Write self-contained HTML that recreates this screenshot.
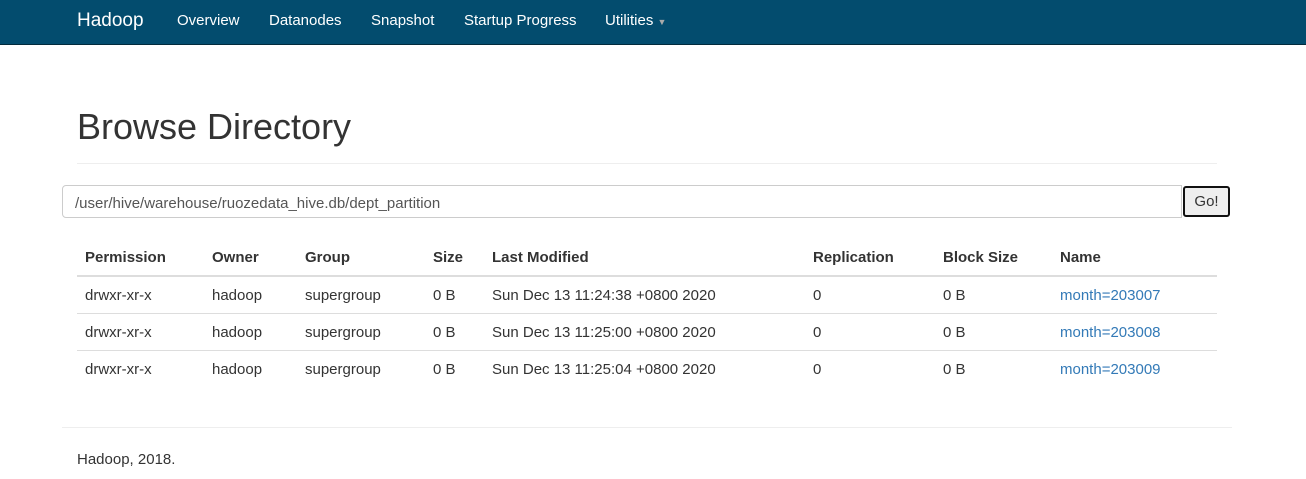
<!DOCTYPE html>
<html><head><style>
body{margin:0;font-family:"Liberation Sans",sans-serif;font-size:15px;color:#333;background:#fff;width:1306px;height:479px;overflow:hidden;position:relative}
.nav{position:absolute;left:0;top:0;width:1306px;height:44px;background:#034c6e;border-bottom:1px solid #022a3c}
.nav span{position:absolute;top:12px;color:#fff;font-size:15px}
.abs{position:absolute;white-space:nowrap}
h1{position:absolute;left:77px;top:106px;margin:0;font-size:36px;font-weight:normal;color:#333}
.hr{position:absolute;height:1px;background:#eee}
.input{position:absolute;left:62px;top:185px;width:1120px;height:33px;border:1px solid #ccc;border-radius:4px 0 0 4px;box-sizing:border-box}
.btn{position:absolute;left:1183px;top:186px;width:47px;height:31px;border:2px solid #111;border-radius:3px;background:#eee;box-sizing:border-box;text-align:center;line-height:28px;font-size:15px}
.row{position:absolute;left:77px;width:1140px;height:1px;background:#ddd}
a{color:#337ab7;text-decoration:none}
</style></head><body>
<div class="nav">
<span style="left:77px;top:10px;font-size:19px">Hadoop</span>
<span style="left:177px">Overview</span>
<span style="left:269px">Datanodes</span>
<span style="left:371px">Snapshot</span>
<span style="left:464px">Startup Progress</span>
<span style="left:605px">Utilities <span style="position:static;font-size:9px;color:#aaa">▼</span></span>
</div>
<h1>Browse Directory</h1>
<div class="hr" style="left:77px;top:163px;width:1140px"></div>
<div class="input"><span class="abs" style="left:12px;top:9px;color:#555">/user/hive/warehouse/ruozedata_hive.db/dept_partition</span></div>
<div class="btn">Go!</div>
<div style="font-weight:bold">
<span class="abs" style="left:85px;top:249px">Permission</span>
<span class="abs" style="left:212px;top:249px">Owner</span>
<span class="abs" style="left:305px;top:249px">Group</span>
<span class="abs" style="left:433px;top:249px">Size</span>
<span class="abs" style="left:492px;top:249px">Last Modified</span>
<span class="abs" style="left:813px;top:249px">Replication</span>
<span class="abs" style="left:943px;top:249px">Block Size</span>
<span class="abs" style="left:1060px;top:249px">Name</span>
</div>
<div class="row" style="top:275px;height:2px"></div>
<div class="row" style="top:313px"></div>
<div class="row" style="top:350px"></div>
<div>
<span class="abs" style="left:85px;top:287px">drwxr-xr-x</span><span class="abs" style="left:212px;top:287px">hadoop</span><span class="abs" style="left:305px;top:287px">supergroup</span><span class="abs" style="left:433px;top:287px">0 B</span><span class="abs" style="left:492px;top:287px">Sun Dec 13 11:24:38 +0800 2020</span><span class="abs" style="left:813px;top:287px">0</span><span class="abs" style="left:943px;top:287px">0 B</span><a class="abs" style="left:1060px;top:287px">month=203007</a>
<span class="abs" style="left:85px;top:324px">drwxr-xr-x</span><span class="abs" style="left:212px;top:324px">hadoop</span><span class="abs" style="left:305px;top:324px">supergroup</span><span class="abs" style="left:433px;top:324px">0 B</span><span class="abs" style="left:492px;top:324px">Sun Dec 13 11:25:00 +0800 2020</span><span class="abs" style="left:813px;top:324px">0</span><span class="abs" style="left:943px;top:324px">0 B</span><a class="abs" style="left:1060px;top:324px">month=203008</a>
<span class="abs" style="left:85px;top:361px">drwxr-xr-x</span><span class="abs" style="left:212px;top:361px">hadoop</span><span class="abs" style="left:305px;top:361px">supergroup</span><span class="abs" style="left:433px;top:361px">0 B</span><span class="abs" style="left:492px;top:361px">Sun Dec 13 11:25:04 +0800 2020</span><span class="abs" style="left:813px;top:361px">0</span><span class="abs" style="left:943px;top:361px">0 B</span><a class="abs" style="left:1060px;top:361px">month=203009</a>
</div>
<div class="hr" style="left:62px;top:427px;width:1170px"></div>
<span class="abs" style="left:77px;top:451px">Hadoop, 2018.</span>
</body></html>
